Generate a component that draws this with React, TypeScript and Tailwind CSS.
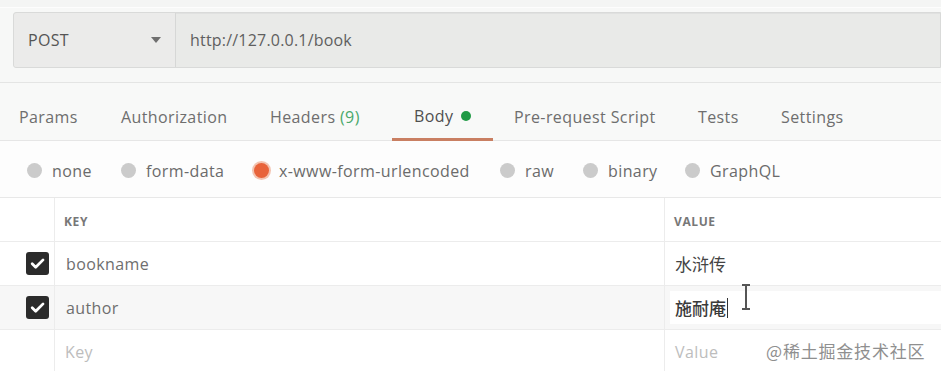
import React from "react";

const font = { fontFamily: '"Open Sans", "Noto Sans", sans-serif' };
const cjk = { fontFamily: '"Noto Sans CJK SC", sans-serif' };

function Radio({ selected }: { selected?: boolean }) {
  return selected ? (
    <span className="w-[15px] h-[15px] rounded-full bg-[#e8633a] ring-[2px] ring-[#f3c3b0] shrink-0" />
  ) : (
    <span className="w-[15px] h-[15px] rounded-full bg-[#cbcbcb] shrink-0" />
  );
}

function Check() {
  return (
    <span className="w-[23px] h-[23px] rounded-[3px] bg-[#2b2b2b] flex items-center justify-center">
      <svg width="17" height="17" viewBox="0 0 16 16" fill="none">
        <path d="M3 8.3l3.3 3.3L13.2 4.6" stroke="#fff" strokeWidth="2.6" strokeLinecap="round" strokeLinejoin="round" />
      </svg>
    </span>
  );
}

export default function App() {
  const radios = [
    { label: "none", w: "w-[94px]" },
    { label: "form-data", w: "w-[133px]" },
    { label: "x-www-form-urlencoded", w: "w-[246px]", sel: true },
    { label: "raw", w: "w-[83px]" },
    { label: "binary", w: "w-[102px]" },
    { label: "GraphQL", w: "w-[120px]" },
  ];
  return (
    <div className="relative w-[941px] h-[371px] overflow-hidden bg-[#f8f9f8]" style={font}>
      {/* top */}
      <div className="h-[83px] border-b border-[#e4e5e4] bg-[#f7f8f7]">
        <div className="h-[8px] border-b border-[#fdfdfd] bg-[#f4f5f4]" />
        <div className="pt-[4px] pl-[13px]">
          <div className="flex h-[56px] border border-[#d9dad9] rounded-l-[3px] bg-[#e9eae8] shadow-[inset_0_1px_0_#e0e1e0]">
            <div className="w-[162px] shrink-0 flex items-center justify-between pl-[14px] pr-[14px] bg-[#ebebea] border-r border-[#d6d7d6] rounded-l-[3px]">
              <span className="text-[16px] text-[#555] font-medium tracking-[0.3px]">POST</span>
              <svg width="10" height="6" viewBox="0 0 10 6"><path d="M0 0h10L5 6z" fill="#6f6f6f" /></svg>
            </div>
            <div className="flex-1 flex items-center pl-[14px] text-[16px] tracking-[0.2px] text-[#5f5f5f]">http://127.0.0.1/book</div>
          </div>
        </div>
      </div>

      {/* tabs */}
      <div className="h-[58px] flex items-end pl-[19px] border-b border-[#e6e6e6] bg-[#f8f9f8] text-[16px] tracking-[0.4px] text-[#6e6e6e]">
        <div className="w-[102px] h-[58px] flex items-center pt-[11px]">Params</div>
        <div className="w-[149px] h-[58px] flex items-center pt-[11px]">Authorization</div>
        <div className="w-[122px] h-[58px] flex items-center pt-[11px]">
          Headers&nbsp;<span className="text-[#4aa86a]">(9)</span>
        </div>
        <div className="w-[101px] h-[58px] flex items-center pt-[11px] pl-[22px] border-b-[3px] border-[#c97f62] text-[#4f4f4f] -mb-px">
          Body
          <span className="ml-[8px] w-[10px] h-[10px] rounded-full bg-[#1f9a45]" />
        </div>
        <div className="w-[205px] h-[58px] flex items-center pt-[11px] pl-[21px]">Pre-request Script</div>
        <div className="w-[83px] h-[58px] flex items-center pt-[11px]">Tests</div>
        <div className="h-[58px] flex items-center pt-[11px]">Settings</div>
      </div>

      {/* radios */}
      <div className="h-[57px] flex items-center pl-[27px] pt-[3px] bg-[#fdfdfd] border-b border-[#e8e8e8] text-[16px] tracking-[0.4px] text-[#6b6b6b]">
        {radios.map((r) => (
          <div key={r.label} className={`${r.w} flex items-center gap-[10px]`}>
            <Radio selected={r.sel} />
            <span>{r.label}</span>
          </div>
        ))}
      </div>

      {/* table */}
      <div className="bg-white">
        <div className="flex h-[44px] border-b border-[#ececec]">
          <div className="w-[55px] border-r border-[#ececec]" />
          <div className="w-[610px] border-r border-[#ececec] flex items-center pl-[9px] pt-[4px] text-[12px] font-bold text-[#777] tracking-[0.6px]">KEY</div>
          <div className="flex-1 flex items-center pl-[9px] pt-[4px] text-[12px] font-bold text-[#777] tracking-[0.6px]">VALUE</div>
        </div>
        <div className="flex h-[44px] border-b border-[#ececec]">
          <div className="w-[55px] border-r border-[#ececec] flex items-center pl-[26px]"><Check /></div>
          <div className="w-[610px] border-r border-[#ececec] flex items-center pl-[11px] text-[16px] tracking-[0.4px] text-[#6e6e6e]">bookname</div>
          <div className="flex-1 flex items-center pl-[10px] text-[17px] text-[#444]" style={cjk}>水浒传</div>
        </div>
        <div className="flex h-[44px] border-b border-[#ececec] bg-[#f7f7f7]">
          <div className="w-[55px] border-r border-[#ececec] flex items-center pl-[26px]"><Check /></div>
          <div className="w-[610px] border-r border-[#ececec] flex items-center pl-[11px] text-[16px] tracking-[0.4px] text-[#6e6e6e]">author</div>
          <div className="flex-1 flex items-center py-[5px] pl-[5px]">
            <div className="h-full w-full bg-white flex items-center pl-[5px] text-[17px] text-[#3a3a3a] font-medium" style={cjk}>
              施耐庵<span className="ml-[1px] w-px h-[20px] bg-[#333]" />
            </div>
          </div>
        </div>
        <div className="flex h-[44px]">
          <div className="w-[55px] border-r border-[#ececec]" />
          <div className="w-[610px] border-r border-[#ececec] flex items-center pl-[10px] text-[16px] tracking-[0.4px] text-[#bdbdbd]">Key</div>
          <div className="flex-1 flex items-center pl-[10px] text-[16px] tracking-[0.4px] text-[#bdbdbd]">Value</div>
        </div>
      </div>

      {/* I-beam cursor */}
      <svg className="absolute left-[740px] top-[284px]" width="12" height="26" viewBox="0 0 12 26">
        <path d="M2 1h8M6 1v24M2 25h8" stroke="#555" strokeWidth="2" fill="none" />
      </svg>

      {/* watermark */}
      <div className="absolute left-[766px] top-[338px] text-[17px] text-[#8f8f8f] tracking-[0.8px]" style={cjk}>
        @稀土掘金技术社区
      </div>
    </div>
  );
}
